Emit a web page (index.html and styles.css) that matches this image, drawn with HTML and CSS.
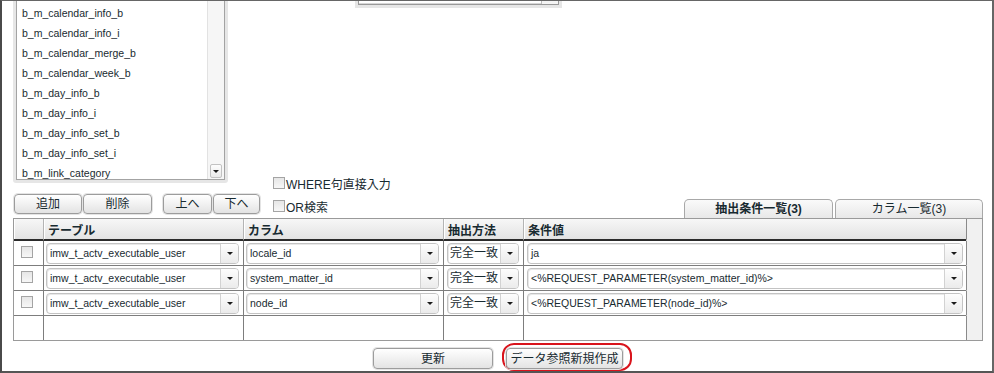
FILE: index.html
```html
<!DOCTYPE html>
<html lang="ja">
  <head>
    <meta charset="UTF-8" />
    <title>データ参照 - 抽出条件</title>
    <link rel="stylesheet" href="styles.css">
  </head>
  <body>
    <div class="frame">
      <div class="top">
        <div class="listwrap">
          <div class="listbox">
            <ul class="items">
              <li>b_m_calendar_info_b</li>
              <li>b_m_calendar_info_i</li>
              <li>b_m_calendar_merge_b</li>
              <li>b_m_calendar_week_b</li>
              <li>b_m_day_info_b</li>
              <li>b_m_day_info_i</li>
              <li>b_m_day_info_set_b</li>
              <li>b_m_day_info_set_i</li>
              <li>b_m_link_category</li>
            </ul>
            <div class="vscroll"><span class="sbtn"></span></div>
          </div>
        </div>

        <div class="side">
          <div class="boxwrap"><div class="box2"><span class="corner"></span></div></div>
          <div class="checks">
            <label class="chk"><span class="cb"></span>WHERE句直接入力</label>
            <label class="chk"><span class="cb"></span>OR検索</label>
          </div>
        </div>

        <div class="btns">
          <button class="btn w68">追加</button>
          <button class="btn w69">削除</button>
          <button class="btn w49 gap">上へ</button>
          <button class="btn w47">下へ</button>
        </div>

        <div class="tabs">
          <div class="tab active">抽出条件一覧(3)</div>
          <div class="tab">カラム一覧(3)</div>
        </div>
      </div>

      <table class="conds">
        <thead>
          <tr>
            <th class="c-chk"></th>
            <th class="c-tbl">テーブル</th>
            <th class="c-col">カラム</th>
            <th class="c-mth">抽出方法</th>
            <th class="c-val">条件値</th>
            <th class="c-sb sb"></th>
          </tr>
        </thead>
        <tbody>
          <tr>
            <td class="chkcell"><span class="cb"></span></td>
            <td><div class="sel"><span class="txt">imw_t_actv_executable_user</span><span class="arr"></span></div></td>
            <td><div class="sel"><span class="txt">locale_id</span><span class="arr"></span></div></td>
            <td class="mth"><div class="sel"><span class="txt jp">完全一致</span><span class="arr"></span></div></td>
            <td class="val"><div class="sel"><span class="txt">ja</span><span class="arr"></span></div></td>
            <td class="sb"></td>
          </tr>
          <tr>
            <td class="chkcell"><span class="cb"></span></td>
            <td><div class="sel"><span class="txt">imw_t_actv_executable_user</span><span class="arr"></span></div></td>
            <td><div class="sel"><span class="txt">system_matter_id</span><span class="arr"></span></div></td>
            <td class="mth"><div class="sel"><span class="txt jp">完全一致</span><span class="arr"></span></div></td>
            <td class="val"><div class="sel"><span class="txt">&lt;%REQUEST_PARAMETER(system_matter_id)%&gt;</span><span class="arr"></span></div></td>
            <td class="sb"></td>
          </tr>
          <tr>
            <td class="chkcell"><span class="cb"></span></td>
            <td><div class="sel"><span class="txt">imw_t_actv_executable_user</span><span class="arr"></span></div></td>
            <td><div class="sel"><span class="txt">node_id</span><span class="arr"></span></div></td>
            <td class="mth"><div class="sel"><span class="txt jp">完全一致</span><span class="arr"></span></div></td>
            <td class="val"><div class="sel"><span class="txt">&lt;%REQUEST_PARAMETER(node_id)%&gt;</span><span class="arr"></span></div></td>
            <td class="sb"></td>
          </tr>
          <tr class="empty">
            <td></td><td></td><td></td><td></td><td></td><td class="sb"></td>
          </tr>
        </tbody>
      </table>

      <div class="footer">
        <button class="btn update">更新</button>
        <span class="mark"><button class="btn create">データ参照新規作成</button></span>
      </div>
    </div>
  </body>
</html>
```

FILE: styles.css
```css
body {
  margin: 0;
  background: #fff;
  font-family: "Liberation Sans", "Noto Sans CJK JP", sans-serif;
  font-size: 12px;
  color: #182a30;
}
.frame {
  box-sizing: border-box;
  width: 994px;
  height: 373px;
  overflow: hidden;
  border-top: 1px solid #666;
  border-left: 2px solid #4a4a4a;
  border-right: 2px solid #666;
  border-bottom: 2px solid #555;
  padding-left: 11px;
}

/* upper area */
.top {
  display: grid;
  grid-template-columns: 249px 11px 1fr 299px;
  grid-template-rows: auto 35px;
  width: 970px;
}
.listwrap {
  grid-column: 1;
  grid-row: 1;
  width: 215px;
  box-sizing: border-box;
  margin-top: -11px;
  padding: 0 3px 3px;
  background: #e6e6e6;
  border-radius: 0 0 3px 3px;
}
.listbox {
  display: flex;
  height: 190px;
  box-sizing: border-box;
  border: 1px solid #a3a3a3;
  background: #fff;
}
.items {
  flex: 1;
  margin: 0;
  padding: 12px 0 0 5px;
  list-style: none;
  overflow: hidden;
}
.items li {
  height: 20px;
  line-height: 20px;
  font-size: 10.5px;
  white-space: nowrap;
}
.vscroll {
  width: 16px;
  border-left: 1px solid #e2e2e2;
  background: #f6f6f6;
  display: flex;
  flex-direction: column;
  justify-content: flex-end;
  align-items: center;
  padding-bottom: 1px;
}
.sbtn {
  width: 12px;
  height: 14px;
  box-sizing: border-box;
  border: 1px solid #c2c2c2;
  border-radius: 2px;
  background: linear-gradient(#fdfdfd, #e9e9e9);
  display: flex;
  align-items: center;
  justify-content: center;
}
.sbtn::after,
.arr::after {
  content: "";
  width: 0;
  height: 0;
  border-top: 3px solid #1a1a1a;
  border-left: 3px solid transparent;
  border-right: 3px solid transparent;
}

.side {
  grid-column: 3;
  grid-row: 1 / 3;
  display: flex;
  flex-direction: column;
  justify-content: space-between;
}
.boxwrap {
  width: 207px;
  box-sizing: border-box;
  margin: -11px 0 0 82px;
  padding: 0 3px 3px;
  background: #e6e6e6;
}
.box2 {
  height: 15px;
  box-sizing: border-box;
  border: 1px solid #999;
  background: #fff;
  box-shadow: inset 0 -1px 0 #d6d6d6;
  display: flex;
  justify-content: flex-end;
}
.corner {
  width: 16px;
  border-left: 1px solid #bbb;
  background: #f4f4f4;
}
.checks {
  display: flex;
  flex-direction: column;
  gap: 9px;
  margin-bottom: 5px;
}
.chk {
  display: flex;
  align-items: center;
  height: 14px;
  font-size: 12px;
}
.cb {
  display: inline-block;
  width: 12px;
  height: 12px;
  box-sizing: border-box;
  border: 1px solid #a4a4a4;
  background: linear-gradient(#e6e6e6, #f7f7f7);
  margin-right: 1px;
}

.btns {
  grid-column: 1;
  grid-row: 2;
  align-self: start;
  margin: 11px 0 0 1px;
  display: flex;
  gap: 1px;
}
.btn {
  height: 20px;
  box-sizing: border-box;
  padding: 0;
  border: 1px solid #9c9c9c;
  border-radius: 4px;
  background: linear-gradient(#ffffff, #e3e3e3);
  box-shadow: 0 0 0 1px #e4e4e4;
  font-family: "Liberation Sans", "Noto Sans CJK JP", sans-serif;
  font-size: 12px;
  color: #182a30;
  line-height: 18px;
}
.w68 { width: 68px; }
.w69 { width: 69px; }
.w49 { width: 49px; }
.w47 { width: 47px; }
.gap { margin-left: 10px; }

.tabs {
  grid-column: 4;
  grid-row: 2;
  align-self: end;
  display: flex;
  gap: 2px;
}
.tab {
  width: 148px;
  height: 19px;
  box-sizing: border-box;
  border: 1px solid #a8a8a8;
  border-bottom: 0;
  border-radius: 5px 5px 0 0;
  background: linear-gradient(#fafafa, #e8e8e8);
  text-align: center;
  line-height: 18px;
}
.tab.active {
  width: 149px;
  font-weight: bold;
}

/* condition table */
.conds {
  width: 970px;
  table-layout: fixed;
  border-collapse: separate;
  border-spacing: 0;
  border: 1px solid #9a9a9a;
}
.conds th,
.conds td {
  box-sizing: border-box;
  padding: 0;
  border-left: 1px solid #7d7d7d;
}
.conds th:first-child,
.conds td:first-child {
  border-left: 0;
}
.conds th {
  height: 22px;
  padding-left: 4px;
  text-align: left;
  font-size: 12px;
  font-weight: bold;
  border-left-color: #b4b4b4;
  border-bottom: 2px solid #2b2b2b;
  background: linear-gradient(#f7f7f7, #e3e3e3);
  box-shadow: inset 1px 0 0 #fff;
}
.c-chk { width: 29px; }
.c-tbl { width: 200px; }
.c-col { width: 200px; }
.c-mth { width: 80px; }
.c-val { width: 443px; }
.c-sb { width: 16px; }
.conds td {
  height: 25px;
  padding: 0 4px 0 2px;
  border-bottom: 1px solid #7d7d7d;
  vertical-align: middle;
}
.conds td.mth { padding: 0 4px 0 3px; }
.conds td.val { padding: 0 3px 0 3px; }
.conds td.chkcell {
  padding: 0 0 0 7px;
}
.conds tr.empty td {
  height: 24px;
  border-bottom: 0;
}
.conds .sb,
.conds th.sb {
  padding: 0;
  background: #f1f1f1;
  border-bottom-color: #f1f1f1;
  border-left-color: #8a8a8a;
  box-shadow: none;
}

.sel {
  display: flex;
  height: 21px;
  box-sizing: border-box;
  border: 1px solid #c3c3c3;
  border-radius: 4px;
  background: #fff;
  box-shadow: inset 1px 1px 0 #e8e8e8;
}
.sel .txt {
  flex: 1;
  padding-left: 3px;
  line-height: 19px;
  font-size: 10.5px;
  white-space: nowrap;
  overflow: hidden;
}
.sel .txt.jp {
  font-size: 12px;
  padding-left: 2px;
}
.arr {
  width: 17px;
  border-left: 1px solid #d2d2d2;
  border-radius: 0 3px 3px 0;
  background: linear-gradient(#fdfdfd, #ebebeb);
  display: flex;
  align-items: center;
  justify-content: center;
}

/* footer */
.footer {
  display: flex;
  align-items: flex-start;
  margin-top: 2px;
}
.update {
  width: 120px;
  height: 21px;
  margin: 5px 0 0 360px;
}
.mark {
  margin-left: 9px;
  padding: 3px 7px 0 2px;
  border: 2px solid #d9141c;
  border-radius: 12px;
}
.create {
  display: block;
  width: 117px;
  height: 21px;
}
```
